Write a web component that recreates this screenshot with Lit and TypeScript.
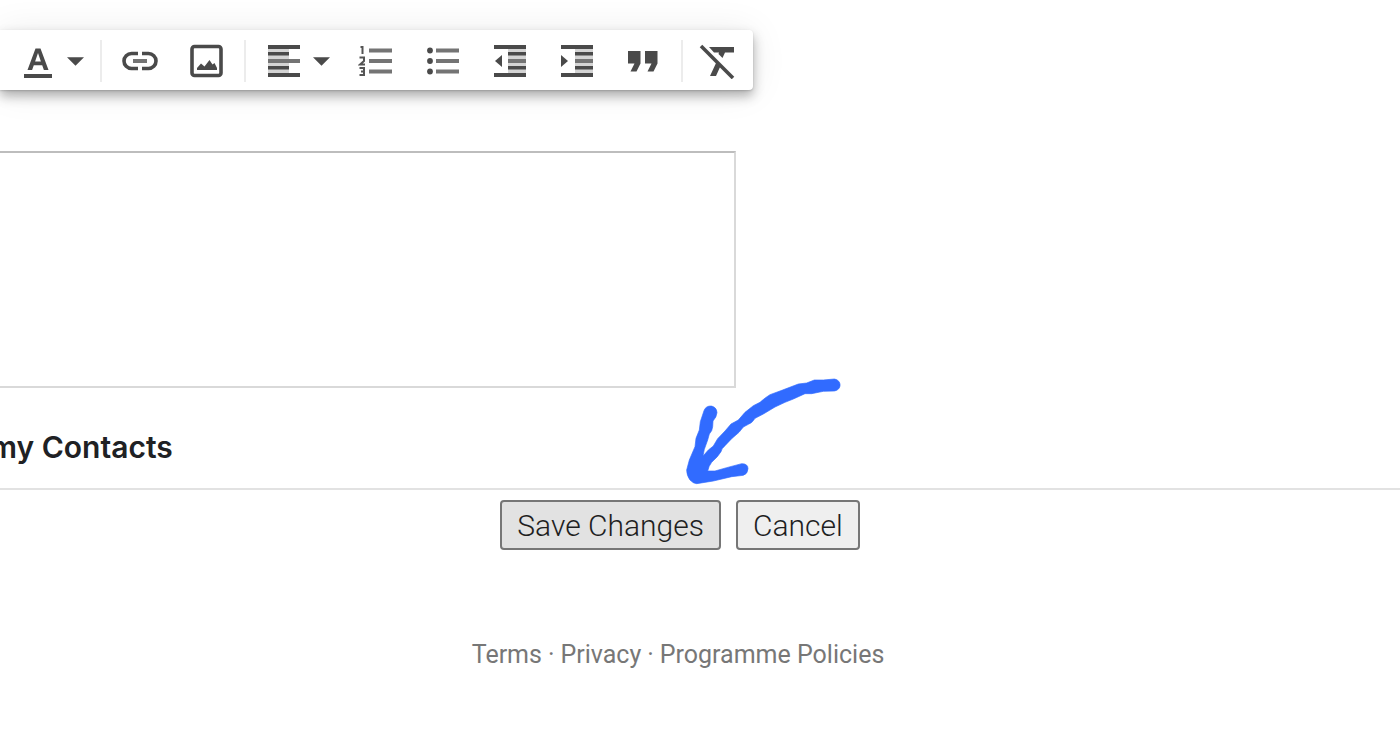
import { LitElement, html, css, svg } from "lit";
import { customElement } from "lit/decorators.js";

const caret = html`<svg class="caret" width="17" height="9" viewBox="0 0 18 9" aria-hidden="true"><path d="M0 0h18L9 9z" /></svg>`;

const icon = (body: unknown) =>
  html`<svg class="icon" width="36" height="36" viewBox="0 0 36 36" aria-hidden="true">${body}</svg>`;

const textColor = icon(svg`<path d="M4 31h28v4H4z"/><path fill-rule="evenodd" d="M15.500 5.500h5L28.500 27h-4.600l-1.700-4.800h-8.400L12.100 27H7.500zM15.100 18.500h5.800L18 10z"/>`);
const link = icon(svg`<path class="line" d="M16 10.500H9.500a7.500 7.500 0 0 0 0 15H16M20 10.500h6.500a7.500 7.500 0 0 1 0 15H20"/><path class="soft" d="M11 16h14v4H11z"/>`);
const image = icon(svg`<rect class="line" x="3" y="3.500" width="29" height="29" rx="2.500"/><path d="M8 27v-2l4-4.500 3.500 3 5-6.500 3 4.500 2-1.500 2.500 5v2z"/>`);
const align = icon(svg`<path class="pale" d="M2 4h21v29H2z"/><path d="M2 2h32v4H2zM2 9h21v3.500H2zM2 23h21v3.500H2zM2 30h32v4H2z"/><path class="soft" d="M2 16h32v4H2z"/>`);
const numbered = icon(svg`<path class="soft" d="M11 5.500h23v4H11zM11 16h23v4H11zM11 26.500h23v4H11z"/><path class="thin" d="M2.500 4h2v7M1.500 14.500H6V18l-4 3.500h5M1.500 25H6v7H1.500M3 28.500h3"/>`);
const bulleted = icon(svg`<path class="soft" d="M11 5.500h23v4H11zM11 16h23v4H11zM11 26.500h23v4H11z"/><circle cx="5" cy="7.500" r="2.900"/><circle cx="5" cy="18" r="2.900"/><circle cx="5" cy="28.500" r="2.900"/>`);
const steps = svg`<path class="pale" d="M16 4h18v29H16z"/><path d="M2 2h32v4H2zM16 9h18v3.500H16zM16 23h18v3.500H16zM2 30h32v4H2z"/><path class="soft" d="M16 16h18v4H16z"/>`;
const outdent = icon(svg`${steps}<path d="M10 12v12l-7-6z"/>`);
const indent = icon(svg`${steps}<path d="M2 12v12l7-6z"/>`);
const quote = icon(svg`<path d="M2 8h12.500v12.500l-4 8H4.500l4-8H2zM19 8h12.500v12.500l-4 8h-6l4-8H19z"/>`);
const clear = icon(svg`<path d="M10 4h25v5.500H26L23.500 15l-4-4 .5-1.500h-5zM17.500 19l4 4L17 33h-6z"/><path class="line" d="M2 3l32 32"/>`);

@customElement("app-root")
export class AppRoot extends LitElement {
  static styles = css`
    :host {
      display: block;
      overflow: hidden;
      padding-top: 30px;
      background: #fff;
      color: #202124;
      font-family: Roboto, "Liberation Sans", sans-serif;
    }
    .toolbar {
      box-sizing: border-box;
      display: flex;
      align-items: center;
      width: max-content;
      height: 60px;
      padding-top: 2px;
      border-radius: 0 4px 4px 0;
      box-shadow: 0 6px 12px rgba(0, 0, 0, 0.3), 0 1px 36px rgba(0, 0, 0, 0.08), 0 1px 2px rgba(0, 0, 0, 0.15);
    }
    .group {
      display: flex;
      padding: 0 4px;
    }
    .group + .group {
      border-left: 2px solid #ececec;
    }
    .group:last-child {
      padding: 0 3px 0 0;
    }
    .tool {
      box-sizing: border-box;
      display: flex;
      align-items: center;
      justify-content: center;
      width: 67px;
      height: 42px;
      padding: 0;
      border: 0;
      background: none;
    }
    .menu {
      width: 92px;
      gap: 11px;
      padding-left: 4px;
    }
    .icon,
    .caret {
      fill: #4a4a4a;
      flex: none;
    }
    .line {
      fill: none;
      stroke: #4a4a4a;
      stroke-width: 3.6;
    }
    .thin {
      fill: none;
      stroke: #555;
      stroke-width: 2;
    }
    .soft {
      fill: #747474;
    }
    .pale {
      fill: #d4d4d4;
    }
    .editor {
      display: block;
      box-sizing: border-box;
      width: 736px;
      max-width: 100%;
      height: 237px;
      margin: 61px 0 0;
      padding: 16px;
      border: 2px solid #d9d9d9;
      border-top-color: #bdbdbd;
      border-left: 0;
      outline: 0;
      resize: none;
      font: inherit;
      font-size: 28px;
    }
    .contacts {
      margin: 40px 0 0 -10px;
      font-family: Inter, Roboto, sans-serif;
      font-size: 30px;
      line-height: 38px;
      font-weight: 600;
    }
    .actions {
      position: relative;
      display: flex;
      justify-content: center;
      gap: 15px;
      margin-top: 22px;
      padding: 10px 40px 0 0;
      border-top: 2px solid #e2e2e2;
    }
    .action {
      height: 50px;
      padding: 0 15px;
      border: 2px solid #767676;
      border-radius: 4px;
      background: #efefef;
      color: #1f1f1f;
      font: inherit;
      font-size: 30px;
      font-weight: 350;
    }
    .save {
      background: #e2e2e2;
    }
    .arrow {
      position: absolute;
      left: calc(50% - 40px);
      bottom: 50px;
      fill: #316bff;
      stroke: #316bff;
      stroke-width: 2;
      stroke-linejoin: round;
      pointer-events: none;
    }
    .footer {
      display: flex;
      justify-content: center;
      gap: 6px;
      margin-top: 89px;
      padding: 0 44px 75px 0;
      color: #777;
      font-size: 25px;
      line-height: 32px;
    }
    .footer a {
      color: inherit;
      text-decoration: none;
    }
  `;

  render() {
    return html`
      <div class="toolbar" role="toolbar" aria-label="Formatting">
        <div class="group">
          <button class="tool menu" aria-label="Text colour">${textColor}${caret}</button>
        </div>
        <div class="group">
          <button class="tool" aria-label="Link">${link}</button>
          <button class="tool" aria-label="Insert image">${image}</button>
        </div>
        <div class="group">
          <button class="tool menu" aria-label="Align">${align}${caret}</button>
          <button class="tool" aria-label="Numbered list">${numbered}</button>
          <button class="tool" aria-label="Bulleted list">${bulleted}</button>
          <button class="tool" aria-label="Indent less">${outdent}</button>
          <button class="tool" aria-label="Indent more">${indent}</button>
          <button class="tool" aria-label="Quote">${quote}</button>
        </div>
        <div class="group">
          <button class="tool" aria-label="Remove formatting">${clear}</button>
        </div>
      </div>
      <textarea class="editor" aria-label="Message"></textarea>
      <div class="contacts">my Contacts</div>
      <div class="actions">
        <button class="action save">Save Changes</button>
        <button class="action">Cancel</button>
        <svg class="arrow" width="200" height="140" viewBox="0 0 600 420" aria-hidden="true">
          <path d="M523 57C546 60 546 90 523 93L490 94L455 101L435 101L400 117L375 127L345 141L310 162L285 175Q277 189 265 193L250 201L237 217L215 236L195 257Q185 265 183 275L172 290L155 307Q146 318 143 333L165 333L200 323L245 311Q264 311 264 326Q263 342 250 346L215 350L160 363L110 371Q99 370 90 360Q80 347 80 330L88 300L105 260L108 235L118 210L121 185L132 152C138 132 170 133 171 158Q170 171 159 183L158 200L155 212L148 222L143 240L133 268L129 288L145 270L160 258L173 236L195 213L213 192L235 180L255 157L280 137L300 127Q315 113 330 104L360 93L415 72L440 69L463 60L490 60Z" />
        </svg>
      </div>
      <footer class="footer">
        <a href="#terms">Terms</a><span>·</span><a href="#privacy">Privacy</a><span>·</span><a href="#policies">Programme Policies</a>
      </footer>
    `;
  }
}
